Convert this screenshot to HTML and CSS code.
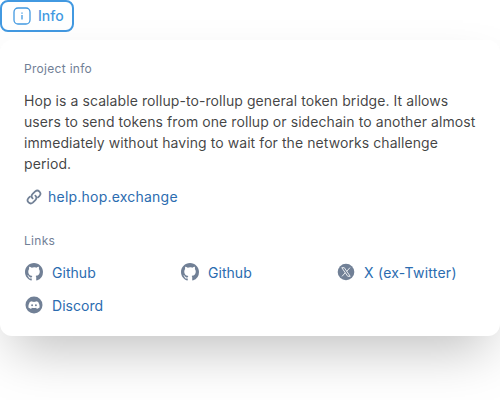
FILE: index.html
```html
<!DOCTYPE html>
<html lang="en">
<head>
<meta charset="utf-8">
<title>Project info</title>
<link rel="stylesheet" href="styles.css">
</head>
<body>
<svg class="sprite" width="0" height="0">
<symbol id="github" viewBox="0 0 16 16"><path d="M8 0C3.580 0 0 3.580 0 8c0 3.540 2.290 6.530 5.470 7.590.4.070.55-.17.55-.38 0-.19-.01-.82-.01-1.490-2.010.37-2.530-.49-2.690-.94-.09-.23-.48-.94-.82-1.130-.28-.15-.68-.52-.01-.53.63-.01 1.080.58 1.230.82.72 1.210 1.870.87 2.330.66.07-.52.28-.87.51-1.070-1.780-.2-3.640-.89-3.640-3.950 0-.87.31-1.590.82-2.150-.08-.2-.36-1.020.08-2.120 0 0 .67-.21 2.200.82A7.600 7.600 0 0 1 8 3.860c.68 0 1.360.09 2 .27 1.530-1.040 2.200-.82 2.200-.82.44 1.100.16 1.920.08 2.120.51.56.82 1.270.82 2.150 0 3.070-1.870 3.750-3.650 3.950.29.25.54.73.54 1.480 0 1.070-.01 1.930-.01 2.200 0 .21.15.46.55.38A8 8 0 0 0 16 8c0-4.420-3.580-8-8-8Z"/></symbol>
</svg>
<button class="trigger">
<svg class="icon-info" viewBox="0 0 20 20" fill="none" stroke="currentColor"><rect x="2" y="2" width="16" height="16" rx="4" stroke-width="1.3"/><path d="M10 9v4.500M10 6.500v1.200" stroke-width="1.300"/></svg>
<span>Info</span>
</button>
<section class="popover">
<h2 class="label">Project info</h2>
<p class="description">Hop is a scalable rollup-to-rollup general token bridge. It allows users to send tokens from one rollup or sidechain to another almost immediately without having to wait for the networks challenge period.</p>
<a class="docs"><svg class="icon-chain" viewBox="0 0 20 20" fill="none" stroke="currentColor" stroke-width="2.200" stroke-linecap="round"><path d="M8.300 11.700a3.900 3.900 0 0 1 0-5.500l3.200-3.200a3.900 3.900 0 0 1 5.500 5.500l-2 2"/><path d="M11.700 8.300a3.900 3.900 0 0 1 0 5.500l-3.200 3.200a3.900 3.900 0 0 1-5.500-5.500l2-2"/></svg><span>help.hop.exchange</span></a>
<h2 class="label">Links</h2>
<div class="links">
<a class="link"><svg class="icon"><use href="#github"/></svg><span>Github</span></a>
<a class="link"><svg class="icon"><use href="#github"/></svg><span>Github</span></a>
<a class="link twitter"><svg class="icon" viewBox="0 0 18 18"><circle cx="9" cy="9" r="8.300" fill="currentColor"/><path d="M4.800 4.700h2.500l5.900 8.600h-2.500zM13 4.600 9.700 8.300M8.200 9.800l-3.200 3.600" fill="none" stroke="#fff" stroke-width=".85"/></svg><span>X (ex-Twitter)</span></a>
<a class="link"><svg class="icon" viewBox="0 0 18 18"><circle cx="9" cy="9" r="8.500" fill="currentColor"/><path d="M7.300 5.200q-1.400.2-2.500.8-1.500 2.500-1.400 5.600 1.300 1 2.700 1.300l.7-1.100q2.200.6 4.400 0l.7 1.100q1.400-.3 2.700-1.300.1-3.100-1.400-5.600-1.100-.6-2.500-.8l-.4.700q-1.300-.2-2.600 0z" fill="#fff"/><ellipse cx="7.100" cy="9.300" rx=".95" ry="1.050" fill="currentColor"/><ellipse cx="10.900" cy="9.300" rx=".95" ry="1.050" fill="currentColor"/></svg><span>Discord</span></a>
</div>
</section>
</body>
</html>
```

FILE: styles.css
```css
body {
  margin: 0;
  height: 400px;
  font-family: Inter, sans-serif;
  background: #fff;
  overflow: hidden;
}
.sprite { position: absolute; }
.trigger {
  display: flex;
  align-items: center;
  height: 32px;
  padding: 0 8px 0 10px;
  gap: 6px;
  border: 2px solid #4299e1;
  border-radius: 8px;
  background: #fff;
  color: #4299e1;
  font: 500 14px/20px Inter, sans-serif;
}
.icon-info { width: 20px; height: 20px; }
.popover {
  box-sizing: border-box;
  height: 296px;
  margin-top: 8px;
  padding: 21px 16px 20px 24px;
  border-radius: 12px;
  background: #fff;
  box-shadow: 0 25px 50px -12px rgba(0, 0, 0, .25);
}
.label {
  margin: 0;
  font-size: 12px;
  line-height: 16px;
  font-weight: 400;
  letter-spacing: .3px;
  color: #718096;
}
.description {
  margin: 13px 0 12px;
  font-size: 14px;
  line-height: 21px;
  letter-spacing: .075px;
  color: rgba(16, 17, 18, .8);
}
.docs {
  display: flex;
  align-items: center;
  gap: 4px;
  height: 21px;
  margin-bottom: 26px;
  font-size: 14px;
  letter-spacing: .22px;
  color: #2b6cb0;
}
.icon-chain {
  width: 16px;
  height: 16px;
  padding: 2px;
  color: #718096;
}
.links {
  display: grid;
  grid-template-columns: repeat(3, 156px);
  row-gap: 12px;
  margin-top: 13px;
}
.link {
  display: flex;
  align-items: center;
  gap: 9px;
  height: 21px;
  padding-left: 1px;
  font-size: 14px;
  letter-spacing: .04px;
  color: #2b6cb0;
}
.twitter { letter-spacing: .25px; }
.link span { white-space: nowrap; }
.link .icon { margin-top: -1px; }
.icon { width: 18px; height: 18px; color: #718096; fill: currentColor; }
```
